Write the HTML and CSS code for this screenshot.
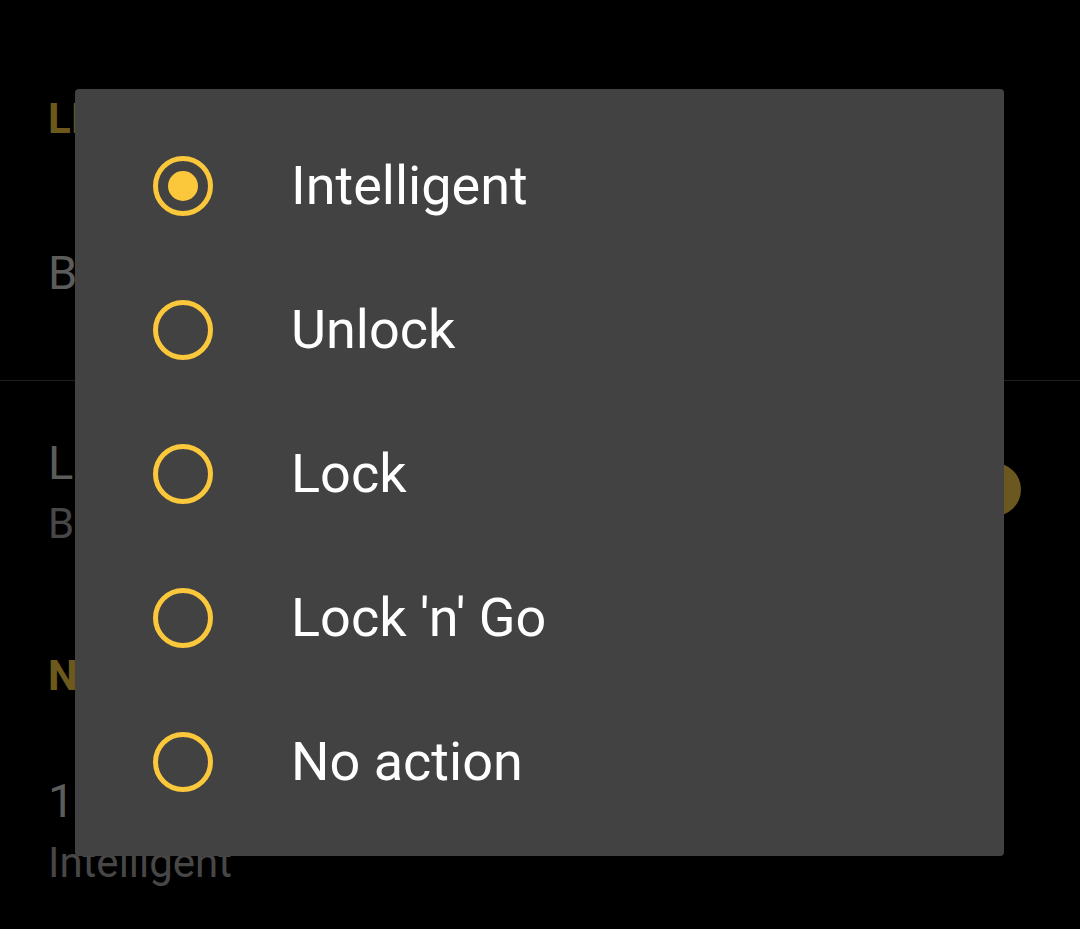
FILE: index.html
```html
<!DOCTYPE html>
<html lang="en">
<head>
<meta charset="utf-8">
<title>Lock action</title>
<link rel="stylesheet" href="styles.css">
</head>
<body>
<div class="screen">
  <div class="settings">
    <div class="category first">LIGHT RING</div>
    <div class="pref single">
      <div class="pref-title">Brightness</div>
    </div>
    <div class="divider"></div>
    <div class="pref toggle-pref">
      <div class="pref-text">
        <div class="pref-title">LED signal</div>
        <div class="pref-summary">Blinks when the door is unlocked</div>
      </div>
      <div class="switch"><div class="switch-track"></div><div class="switch-thumb"></div></div>
    </div>
    <div class="category second">NUKI FOB</div>
    <div class="pref last">
      <div class="pref-title">1x press</div>
      <div class="pref-summary">Intelligent</div>
    </div>
  </div>

  <div class="dialog" role="dialog">
    <div class="option">
      <span class="radio checked"><span class="dot"></span></span>
      <span class="label">Intelligent</span>
    </div>
    <div class="option">
      <span class="radio"></span>
      <span class="label">Unlock</span>
    </div>
    <div class="option">
      <span class="radio"></span>
      <span class="label">Lock</span>
    </div>
    <div class="option">
      <span class="radio"></span>
      <span class="label">Lock 'n' Go</span>
    </div>
    <div class="option">
      <span class="radio"></span>
      <span class="label">No action</span>
    </div>
  </div>
</div>
</body>
</html>
```

FILE: styles.css
```css
html, body {
  margin: 0;
  padding: 0;
  background: #000;
}

body {
  font-family: Roboto, "Noto Sans", "Liberation Sans", sans-serif;
  width: 1080px;
  height: 929px;
  overflow: hidden;
}

.screen {
  position: relative;
  width: 1080px;
  height: 929px;
  background: #000;
}

/* Background settings list (dimmed behind dialog) */
.settings {
  display: flex;
  flex-direction: column;
  padding-left: 48px;
}

.category {
  font-size: 42px;
  line-height: 50px;
  font-weight: 700;
  color: #6e591d;
  white-space: nowrap;
}

.category.first {
  margin-top: 94px;
}

.category.second {
  margin-top: 102px;
}

.pref-title {
  font-size: 47px;
  line-height: 56px;
  color: #5c5c5c;
  white-space: nowrap;
}

.pref-summary {
  font-size: 42px;
  line-height: 50px;
  color: #474747;
  white-space: nowrap;
}

.pref.single {
  padding-top: 101px;
  padding-bottom: 79px;
}

.divider {
  height: 1px;
  margin-left: -48px;
  background: #1e1e1e;
}

.pref.toggle-pref {
  display: flex;
  align-items: flex-start;
  justify-content: space-between;
  padding-top: 54px;
  padding-right: 59px;
}

.toggle-pref .pref-summary {
  margin-top: 8px;
}

.switch {
  position: relative;
  width: 100px;
  height: 53px;
  margin-top: 28px;
}

.switch-track {
  position: absolute;
  left: 10px;
  right: 10px;
  top: 12px;
  height: 29px;
  border-radius: 15px;
  background: #3a3210;
}

.switch-thumb {
  position: absolute;
  right: 0;
  top: 0;
  width: 53px;
  height: 53px;
  border-radius: 50%;
  background: #6b5820;
}

.pref.last {
  padding-top: 72px;
}

.pref.last .pref-summary {
  margin-top: 9px;
}

/* Dialog */
.dialog {
  position: absolute;
  left: 75px;
  top: 89px;
  width: 929px;
  height: 767px;
  box-sizing: border-box;
  padding: 25px 0 22px 78px;
  background: #424242;
  border-radius: 4px;
  display: flex;
  flex-direction: column;
}

.option {
  height: 144px;
  display: flex;
  align-items: center;
  gap: 78px;
}

.radio {
  flex: none;
  width: 60px;
  height: 60px;
  box-sizing: border-box;
  border: 5px solid #fbc83c;
  border-radius: 50%;
  display: flex;
  align-items: center;
  justify-content: center;
}

.radio .dot {
  width: 30px;
  height: 30px;
  border-radius: 50%;
  background: #fbc83c;
}

.label {
  font-size: 54px;
  line-height: 64px;
  color: #ffffff;
  white-space: nowrap;
}
```
